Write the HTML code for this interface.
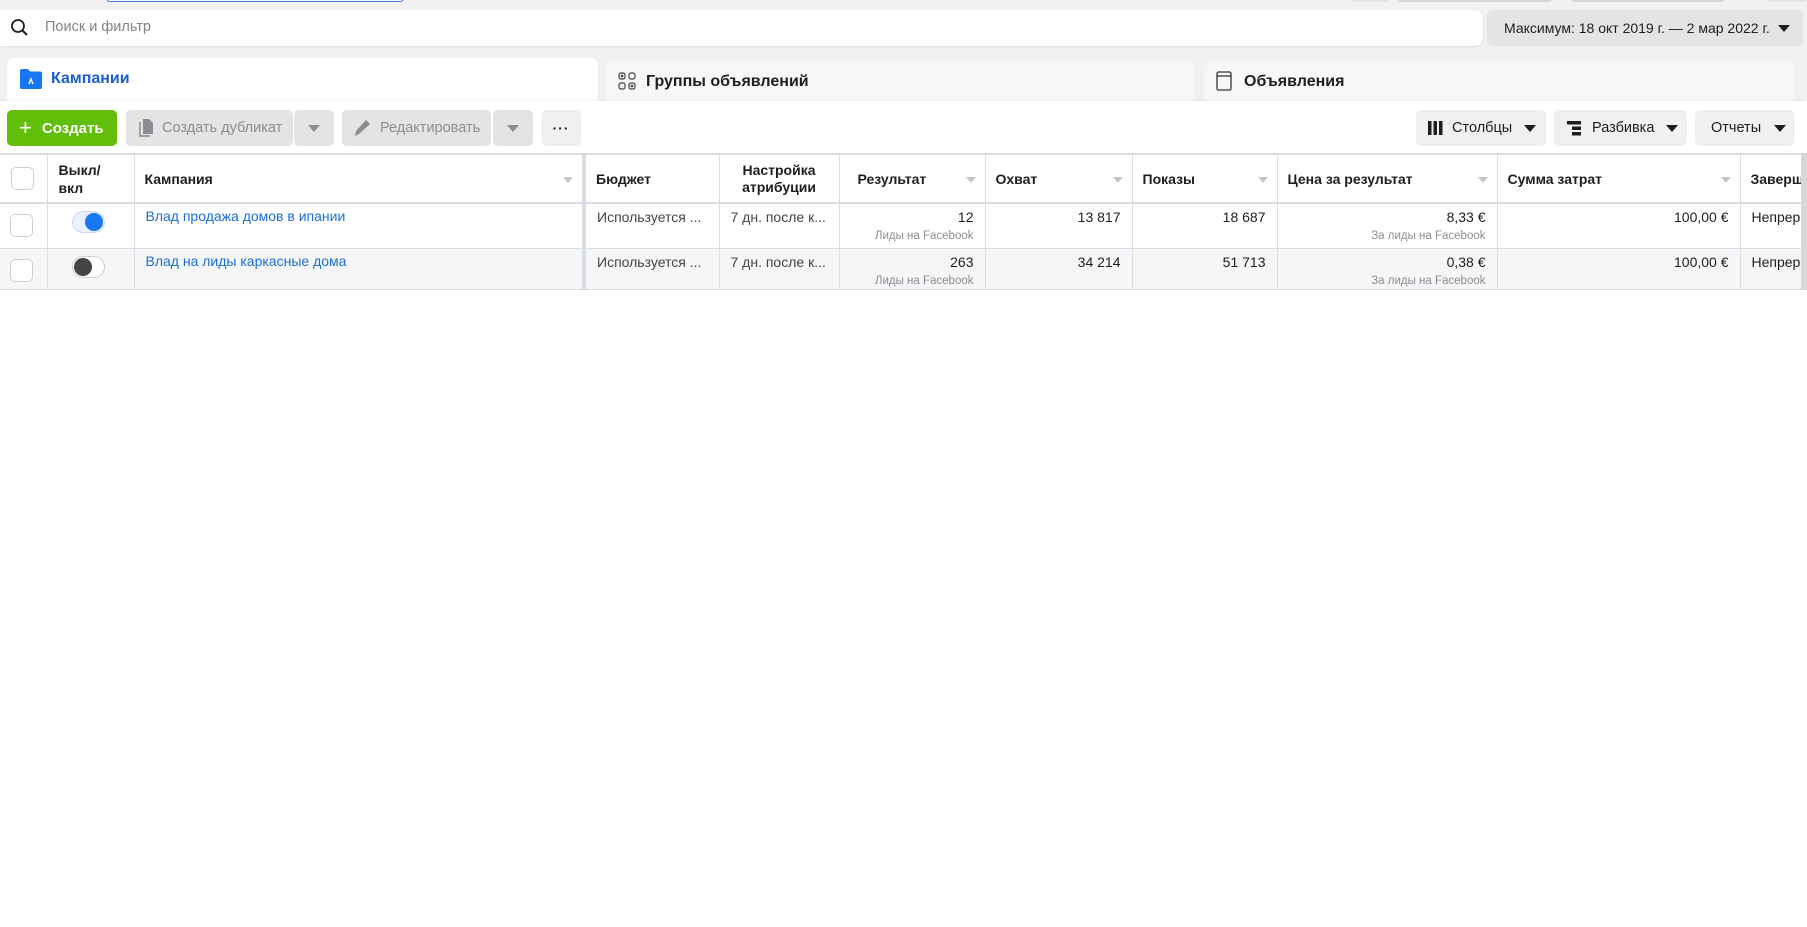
<!DOCTYPE html>
<html><head><meta charset="utf-8">
<style>
*{box-sizing:border-box;margin:0;padding:0}
body{width:1807px;height:927px;background:#fff;font-family:"Liberation Sans",Arial,sans-serif;color:#1c1e21;position:relative;overflow:hidden}
.abs{position:absolute}
.topbg{left:0;top:0;width:1807px;height:101px;background:#f1f1f1}
.btn{position:absolute;top:110px;height:36px;border-radius:5px;background:#ebebeb;display:flex;align-items:center;font-size:15px;color:#1c1e21}
.dis{background:#e4e4e4;color:#8a8d91}
.tri{width:0;height:0;border-left:6px solid transparent;border-right:6px solid transparent;border-top:7px solid #1c1e21;display:inline-block}
.tri.g{border-top-color:#8a8d91}
table{position:absolute;left:0;top:153px;width:1820px;border-collapse:collapse;table-layout:fixed;font-size:14px}
td,th{border:1px solid #dadde1;border-top:none;vertical-align:top;overflow:hidden;white-space:nowrap}
th{height:49px;border-top:2px solid #dadde1;border-bottom:2px solid #dadde1;font-weight:bold;text-align:left;vertical-align:middle;padding:0 10px;position:relative;font-size:14px}
th .s{position:absolute;right:9px;top:22px;width:0;height:0;border-left:5px solid transparent;border-right:5px solid transparent;border-top:6px solid #c4c6ca}
tr.r1 td{height:45px;background:#fff}
tr.r2 td{height:41px;background:#f5f6f7}
td{padding:5px 11px 0 11px}
td.n{text-align:right}
.sub{font-size:11.5px;color:#8a8d91;margin-top:5px}
.cb{width:23px;height:23px;border:1px solid #ccd0d5;border-radius:5px;background:#fff;margin:3px 0 0 -1px}
a{color:#1a6ed8;text-decoration:none}
</style></head><body>
<div class="abs topbg"></div>
<div class="abs" style="left:106px;top:-4px;width:298px;height:6px;border:1.5px solid #4b7be0;border-top:none;border-radius:0 0 4px 4px;background:#fff"></div>
<div class="abs" style="left:1352px;top:-4px;width:36px;height:6px;background:#e3e3e3;border-radius:3px"></div>
<div class="abs" style="left:1398px;top:-4px;width:154px;height:6px;background:#d6d6d6;border-radius:3px"></div>
<div class="abs" style="left:1571px;top:-4px;width:153px;height:6px;background:#d6d6d6;border-radius:3px"></div>
<div class="abs" style="left:1767px;top:-4px;width:40px;height:6px;background:#e3e3e3;border-radius:3px"></div>

<div class="abs" style="left:0;top:10px;width:1483px;height:36px;background:#fff;border-radius:0 8px 8px 0;box-shadow:0 1px 2px rgba(0,0,0,.08)"></div>
<svg class="abs" style="left:10px;top:18px" width="20" height="20" viewBox="0 0 20 20"><circle cx="8" cy="8" r="6" fill="none" stroke="#1c1e21" stroke-width="1.8"/><path d="M12.5 12.5L17 17" stroke="#1c1e21" stroke-width="2"/></svg>
<div class="abs" style="left:45px;top:19px;font-size:14.5px;color:#80848a">Поиск и фильтр</div>
<div class="abs" style="left:1487px;top:10px;width:316px;height:36px;background:#e4e4e4;border-radius:6px;font-size:14px;color:#1c1e21;padding:10px 0 0 17px">Максимум: 18 окт 2019 г. — 2 мар 2022 г.</div>
<div class="abs tri" style="left:1778px;top:25px"></div>

<div class="abs" style="left:7px;top:58px;width:591px;height:50px;background:#fff;border-radius:8px 8px 0 0"></div>
<svg class="abs" style="left:20px;top:69px" width="22" height="20" viewBox="0 0 22 20"><path d="M0 2a2 2 0 0 1 2-2h6l2 2.5h10a2 2 0 0 1 2 2V18a2 2 0 0 1-2 2H2a2 2 0 0 1-2-2z" fill="#1877f2"/><path d="M9 15l2-5 2 5" stroke="#fff" stroke-width="1.4" fill="none"/></svg>
<div class="abs" style="left:51px;top:70px;font-size:16px;font-weight:bold;color:#1a5fd0">Кампании</div>
<div class="abs" style="left:606px;top:61px;width:589px;height:45px;background:#f7f7f7;border-radius:8px 8px 0 0"></div>
<svg class="abs" style="left:618px;top:72px" width="18" height="18" viewBox="0 0 18 18" fill="none" stroke="#444" stroke-width="1.2"><rect x="1" y="1" width="6" height="6" rx="2"/><rect x="11" y="1" width="6" height="6" rx="2"/><rect x="1" y="11" width="6" height="6" rx="2"/><rect x="11" y="11" width="6" height="6" rx="2"/><circle cx="4" cy="4" r=".8"/><circle cx="14" cy="14" r=".8"/></svg>
<div class="abs" style="left:646px;top:73px;font-size:16px;font-weight:bold">Группы объявлений</div>
<div class="abs" style="left:1204px;top:61px;width:591px;height:45px;background:#f7f7f7;border-radius:8px 8px 0 0"></div>
<svg class="abs" style="left:1216px;top:71px" width="16" height="20" viewBox="0 0 16 20" fill="none" stroke="#333" stroke-width="1.3"><rect x="1" y="1" width="14" height="18" rx="1.5"/><path d="M1 5h14"/></svg>
<div class="abs" style="left:1244px;top:73px;font-size:16px;font-weight:bold">Объявления</div>
<div class="abs" style="left:0;top:101px;width:1807px;height:60px;background:#fff;border-radius:0 8px 0 0;box-shadow:0 -1px 2px rgba(0,0,0,.05)"></div>
<div class="abs" style="left:0;top:101px;width:7px;height:10px;background:#fff"></div>

<div class="btn" style="left:7px;width:110px;background:#63be09;color:#fff;font-weight:bold;padding-left:12px"><span style="font-size:22px;font-weight:normal;margin-right:10px;line-height:1">+</span>Создать</div>
<div class="btn dis" style="left:126px;width:167px;padding-left:12px;font-size:14.5px"><svg width="16" height="18" viewBox="0 0 16 18" style="margin-right:8px"><path d="M2 3v14h10" fill="none" stroke="#8a8d91" stroke-width="1.5"/><path d="M5 0h6l4 4v11H5z" fill="#8a8d91"/></svg>Создать дубликат</div>
<div class="btn dis" style="left:294px;width:40px;justify-content:center"><span class="tri g"></span></div>
<div class="btn dis" style="left:342px;width:149px;padding-left:12px;font-size:14.5px"><svg width="16" height="18" viewBox="0 0 16 18" style="margin-right:10px"><path d="M1 17l1-5L12 1l4 4L5 15z" fill="#8a8d91"/></svg>Редактировать</div>
<div class="btn dis" style="left:493px;width:40px;justify-content:center"><span class="tri g"></span></div>
<div class="btn" style="left:541px;width:40px;justify-content:center;background:#f0f0f0;font-weight:bold;font-size:14px;letter-spacing:1px">···</div>

<div class="btn" style="left:1416px;width:130px;padding-left:12px;background:#f0f0f0;font-size:14.5px"><svg width="15" height="14" style="margin-right:9px"><rect x="0" y="0" width="3.5" height="14" fill="#1c1e21"/><rect x="5.5" y="0" width="3.5" height="14" fill="#1c1e21"/><rect x="11" y="0" width="3.5" height="14" fill="#1c1e21"/></svg>Столбцы<span class="tri" style="margin-left:12px"></span></div>
<div class="btn" style="left:1554px;width:133px;padding-left:13px;background:#f0f0f0;font-size:14.5px"><svg width="15" height="15" style="margin-right:10px"><rect x="0" y="0" width="14" height="3.5" fill="#1c1e21"/><rect x="5" y="5.5" width="9" height="3.5" fill="#1c1e21"/><rect x="5" y="11" width="9" height="3.5" fill="#1c1e21"/></svg>Разбивка<span class="tri" style="margin-left:12px"></span></div>
<div class="btn" style="left:1695px;width:100px;padding-left:16px;background:#f0f0f0;font-size:14.5px">Отчеты<span class="tri" style="margin-left:13px"></span></div>

<table>
<colgroup><col style="width:47px"><col style="width:87px"><col style="width:450px"><col style="width:135px"><col style="width:120px"><col style="width:146px"><col style="width:147px"><col style="width:145px"><col style="width:220px"><col style="width:243px"><col style="width:80px"></colgroup>
<tr>
<th style="border-left:none;padding:0 0 0 11px"><div class="cb" style="margin:0"></div></th>
<th style="line-height:18px;padding-left:11px">Выкл/<br>вкл</th>
<th style="border-right:4px solid #dadde1">Кампания<span class="s"></span></th>
<th>Бюджет</th>
<th style="text-align:center;line-height:17px">Настройка<br>атрибуции</th>
<th style="padding-left:18px">Результат<span class="s"></span></th>
<th>Охват<span class="s"></span></th>
<th>Показы<span class="s"></span></th>
<th>Цена за результат<span class="s"></span></th>
<th>Сумма затрат<span class="s"></span></th>
<th>Заверш</th>
</tr>
<tr class="r1">
<td style="border-left:none;padding-top:7px"><div class="cb"></div></td>
<td style="padding:7px 0 0 24px"><div style="width:33px;height:22px;border-radius:11px;background:#e7f0fd;border:1px solid #c9d9f0;position:relative"><div style="position:absolute;right:1px;top:1px;width:18px;height:18px;border-radius:50%;background:#1877f2"></div></div></td>
<td style="border-right:4px solid #dadde1;padding-top:4px"><a>Влад продажа домов в ипании</a></td>
<td style="color:#444">Используется ...</td>
<td style="color:#444">7 дн. после к...</td>
<td class="n">12<div class="sub">Лиды на Facebook</div></td>
<td class="n">13 817</td>
<td class="n">18 687</td>
<td class="n">8,33 €<div class="sub">За лиды на Facebook</div></td>
<td class="n">100,00 €</td>
<td>Непрерывно</td>
</tr>
<tr class="r2">
<td style="border-left:none;padding-top:7px"><div class="cb"></div></td>
<td style="padding:7px 0 0 24px"><div style="width:33px;height:22px;border-radius:11px;background:#fff;border:1px solid #ccd0d5;position:relative"><div style="position:absolute;left:1px;top:1px;width:18px;height:18px;border-radius:50%;background:#444"></div></div></td>
<td style="border-right:4px solid #dadde1;padding-top:4px"><a>Влад на лиды каркасные дома</a></td>
<td style="color:#444">Используется ...</td>
<td style="color:#444">7 дн. после к...</td>
<td class="n">263<div class="sub">Лиды на Facebook</div></td>
<td class="n">34 214</td>
<td class="n">51 713</td>
<td class="n">0,38 €<div class="sub">За лиды на Facebook</div></td>
<td class="n">100,00 €</td>
<td>Непрерывно</td>
</tr>
</table>
<div class="abs" style="left:1801px;top:153px;width:6px;height:137px;background:#d8d8d8"></div>
</body></html>
